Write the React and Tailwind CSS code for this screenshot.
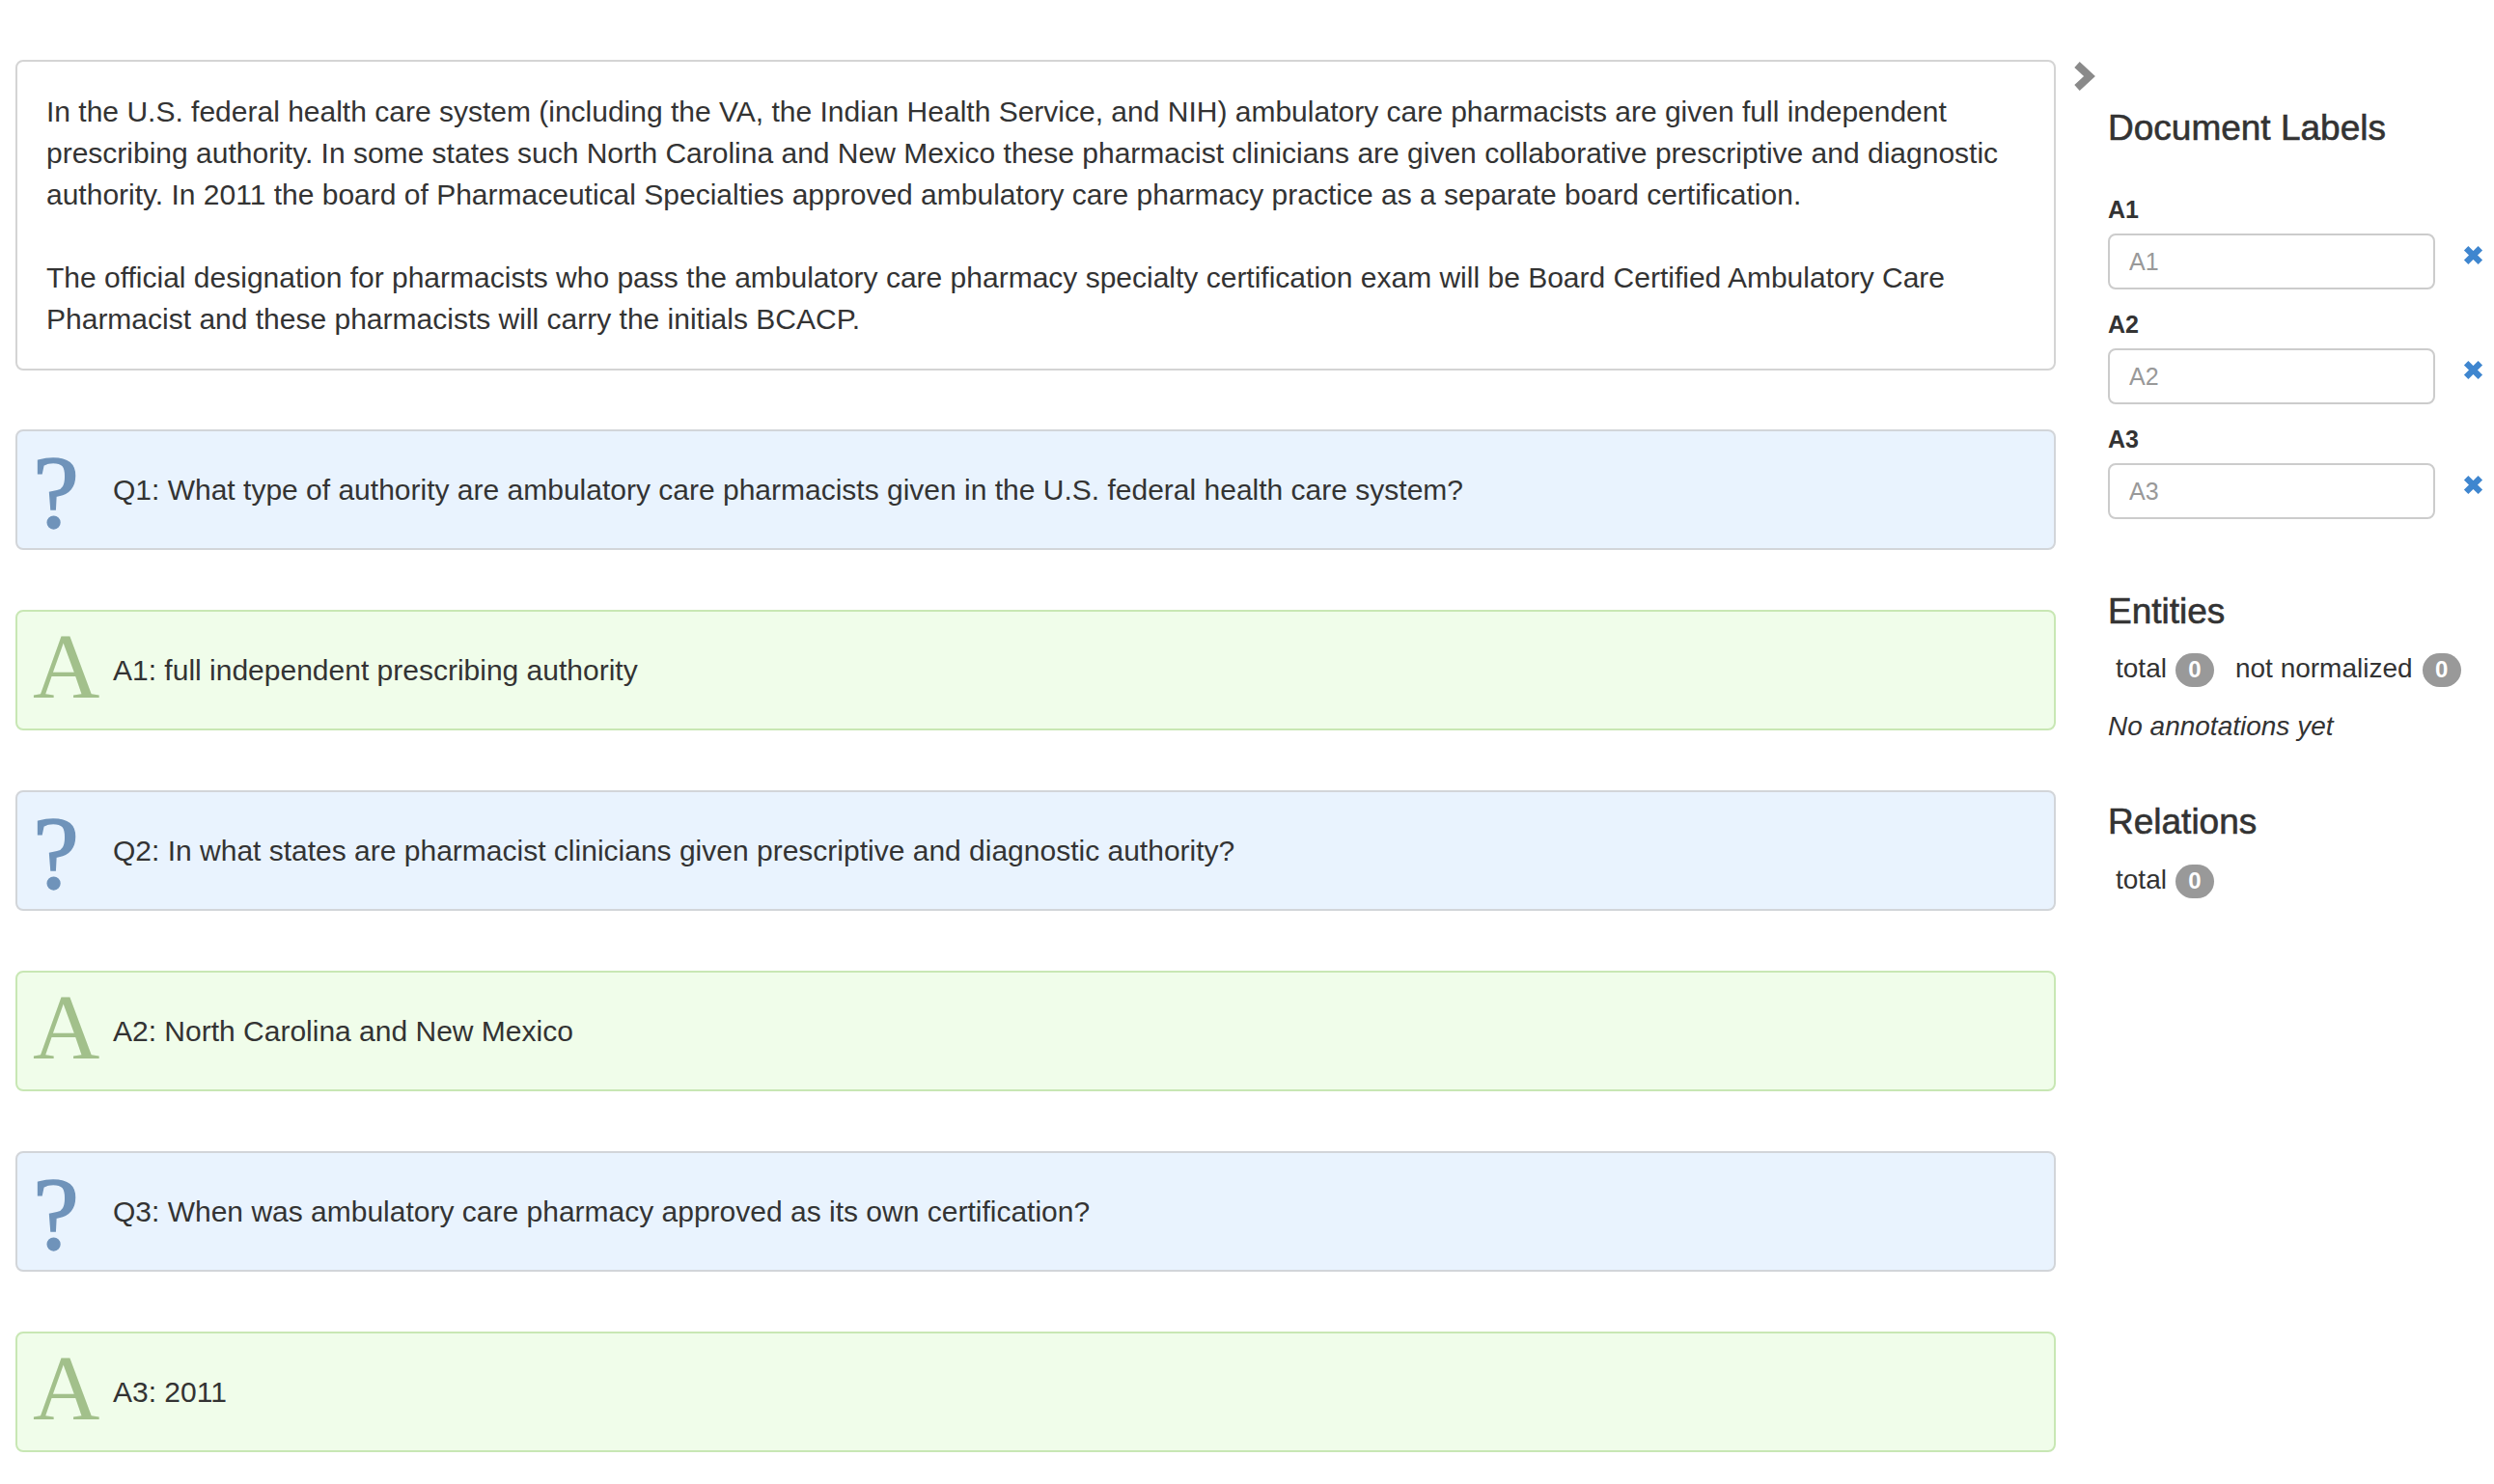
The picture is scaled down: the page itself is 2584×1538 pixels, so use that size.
import React from 'react';

const sans = { fontFamily: '"Liberation Sans", Arial, sans-serif' };
const serif = { fontFamily: '"Liberation Serif", "Times New Roman", serif' };

const items = [
  { kind: 'q', text: 'Q1: What type of authority are ambulatory care pharmacists given in the U.S. federal health care system?' },
  { kind: 'a', text: 'A1: full independent prescribing authority' },
  { kind: 'q', text: 'Q2: In what states are pharmacist clinicians given prescriptive and diagnostic authority?' },
  { kind: 'a', text: 'A2: North Carolina and New Mexico' },
  { kind: 'q', text: 'Q3: When was ambulatory care pharmacy approved as its own certification?' },
  { kind: 'a', text: 'A3: 2011' },
];

const labels = ['A1', 'A2', 'A3'];

const Badge = ({ n }) => (
  <span className="inline-flex h-[35px] w-[40px] items-center justify-center rounded-full bg-[#999999] text-[24px] font-bold text-white">
    {n}
  </span>
);

const RemoveIcon = () => (
  <svg width="21" height="21" viewBox="0 0 20 20" className="mb-[14px]">
    <path d="M3 3 L17 17 M17 3 L3 17" stroke="#3f86cf" strokeWidth="6" strokeLinecap="butt" />
  </svg>
);

const QABox = ({ kind, text }) => {
  const isQ = kind === 'q';
  return (
    <div
      className={
        isQ
          ? 'flex h-[125px] items-center rounded-[8px] border-2 border-[#d2d5d9] bg-[#e9f3fe] pl-[16px]'
          : 'flex h-[125px] items-center rounded-[8px] border-2 border-[#c8e7b4] bg-[#f0fdea] pl-[16px]'
      }
    >
      <div className="flex w-[83px] shrink-0 items-center">
        {isQ ? (
          <span style={serif} className="mt-[4px] block text-[108px] leading-none text-[#6f93ba] [-webkit-text-stroke:1.5px_#6f93ba]">?</span>
        ) : (
          <span style={serif} className="mb-[8px] block text-[96px] leading-none text-[#a2c08b]">A</span>
        )}
      </div>
      <div className="text-[30px] leading-[43px] text-[#333333]">{text}</div>
    </div>
  );
};

export default function App() {
  return (
    <div style={sans} className="flex min-h-screen bg-white pl-[16px] pt-[62px] text-[#333333]">
      <div className="w-[2114px] shrink-0">
        <div className="rounded-[8px] border-2 border-[#d4d4d4] px-[30px] py-[30px] text-[30px] leading-[43px]">
          In the U.S. federal health care system (including the VA, the Indian Health Service, and NIH) ambulatory care pharmacists are given full independent prescribing authority. In some states such North Carolina and New Mexico these pharmacist clinicians are given collaborative prescriptive and diagnostic authority. In 2011 the board of Pharmaceutical Specialties approved ambulatory care pharmacy practice as a separate board certification.
          <br />
          <br />
          The official designation for pharmacists who pass the ambulatory care pharmacy specialty certification exam will be Board Certified Ambulatory Care Pharmacist and these pharmacists will carry the initials BCACP.
        </div>
        <div className="mt-[61px] flex flex-col gap-[62px]">
          {items.map((it, i) => (
            <QABox key={i} kind={it.kind} text={it.text} />
          ))}
        </div>
      </div>

      <div className="ml-[18px] flex-1">
        <svg width="24" height="32" viewBox="0 0 24 32" className="mt-[1px] block">
          <path d="M4 4 L17 16 L4 28" fill="none" stroke="#8a8a8a" strokeWidth="8" strokeLinejoin="miter" />
        </svg>
        <div className="pl-[36px]">
          <h4 className="mt-[18px] text-[37px] leading-[40px] [-webkit-text-stroke:0.6px_#333333]">Document Labels</h4>
          <div className="mt-[46px] flex flex-col gap-[18px]">
            {labels.map((l) => (
              <div key={l}>
                <div className="text-[25px] leading-[36px] font-bold">{l}</div>
                <div className="mt-[7px] flex items-center">
                  <input
                    placeholder={l}
                    className="h-[58px] w-[339px] rounded-[8px] border-2 border-[#cccccc] bg-white px-[20px] text-[25px] outline-none placeholder:text-[#999999]"
                  />
                  <span className="ml-[29px] flex">
                    <RemoveIcon />
                  </span>
                </div>
              </div>
            ))}
          </div>

          <h4 className="mt-[76px] text-[37px] leading-[40px] [-webkit-text-stroke:0.6px_#333333]">Entities</h4>
          <div className="mt-[19px] flex items-center pl-[8px] text-[28px] leading-[40px]">
            <span>total</span>
            <span className="ml-[9px]"><Badge n={0} /></span>
            <span className="ml-[22px]">not normalized</span>
            <span className="ml-[10px]"><Badge n={0} /></span>
          </div>
          <div className="mt-[20px] text-[28px] leading-[40px] italic">No annotations yet</div>

          <h4 className="mt-[59px] text-[37px] leading-[40px] [-webkit-text-stroke:0.6px_#333333]">Relations</h4>
          <div className="mt-[20px] flex items-center pl-[8px] text-[28px] leading-[40px]">
            <span>total</span>
            <span className="ml-[9px]"><Badge n={0} /></span>
          </div>
        </div>
      </div>
    </div>
  );
}
